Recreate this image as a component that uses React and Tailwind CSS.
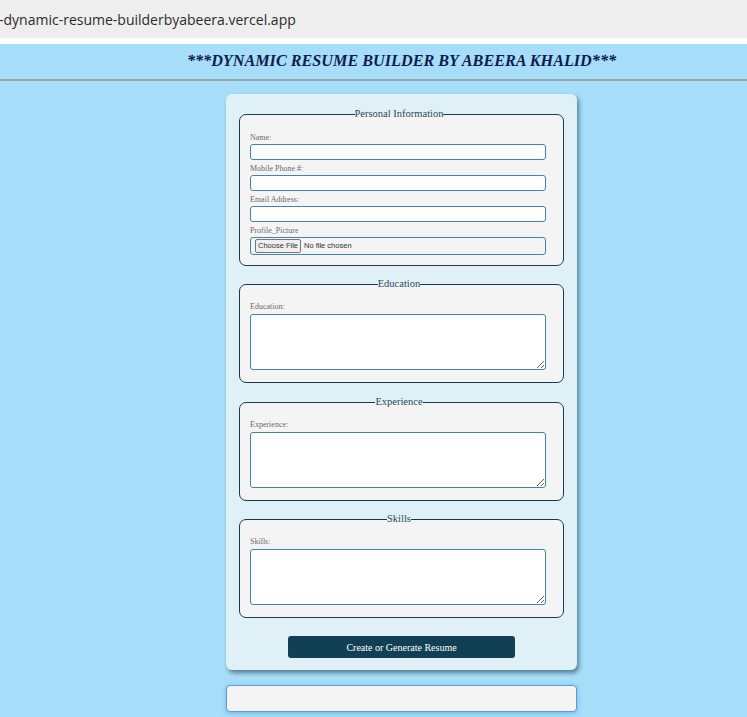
import React from 'react';

const serif = "font-['Liberation_Serif','Times_New_Roman',serif]";

const Field = ({ label, children, first }) => (
  <div className={first ? '' : 'mt-[4px]'}>
    <label className="block text-[8px] leading-[10px] text-[#6b6b6b]">{label}</label>
    <div className="mt-[1px]">{children}</div>
  </div>
);

const TextInput = () => (
  <input type="text" className="block w-[296px] h-[16px] bg-white border border-[#3f86a3] rounded-[3px] outline-none" />
);

const Section = ({ title, children, className = '' }) => (
  <fieldset className={`border border-[#163b4c] rounded-[7px] bg-[#f4f4f4] pl-[10px] pr-[15px] min-w-0 ${className}`}>
    <legend className={`mx-auto px-0 text-[10.5px] leading-[12px] text-[#1f4a5c] ${serif}`}>{title}</legend>
    {children}
  </fieldset>
);

const AreaSection = ({ title, label, className }) => (
  <Section title={title} className={`pt-[12px] pb-[12px] ${className}`}>
    <label className="block text-[8px] leading-[10px] text-[#6b6b6b]">{label}</label>
    <textarea className="block mt-[2px] w-[296px] h-[56px] bg-white border border-[#3f86a3] rounded-[3px] outline-none" />
  </Section>
);

export default function App() {
  return (
    <div className="min-h-[717px] bg-[#a6ddf9] overflow-hidden">
      {/* address bar */}
      <div className="h-[38px] bg-[#efeeee] flex items-center">
        <span className="text-[14px] text-[#2c2c2c] font-['Open_Sans',sans-serif] -ml-[1px]">-dynamic-resume-builderbyabeera.vercel.app</span>
      </div>
      <div className="h-[6px] bg-white" />

      <div className={`w-[803px] ${serif}`}>
        <header className="h-[37px] bg-[#a6ddf9] border-b-2 border-[#9aa3a8] flex items-center justify-center">
          <h1 className="text-[16.2px] font-bold italic text-[#0e1c4c]">***DYNAMIC RESUME BUILDER BY ABEERA KHALID***</h1>
        </header>

        <div className="flex flex-col items-center pt-[13px]">
          <form className="w-[351px] bg-[#dff0f6] rounded-[6px] shadow-[2px_3px_4px_rgba(20,50,60,0.55)] px-[13px] pt-[14px] pb-[12px]">
            <Section title="Personal Information" className="pt-[13px] pb-[10px]">
              <Field label="Name:" first><TextInput /></Field>
              <Field label="Mobile Phone #:"><TextInput /></Field>
              <Field label="Email Address:"><TextInput /></Field>
              <Field label="Profile_Picture">
                <div className="w-[296px] h-[18px] border border-[#3f86a3] rounded-[3px] flex items-center pl-[4px]">
                  <input type="file" className="text-[7.5px] text-[#333] font-['Liberation_Sans',sans-serif] file:text-[7.5px] file:px-[2px] file:py-0 file:mr-[3px] file:border file:border-[#767676] file:rounded-[2px] file:bg-[#efefef]" />
                </div>
              </Field>
            </Section>

            <AreaSection title="Education" label="Education:" className="mt-[12px]" />
            <AreaSection title="Experience" label="Experience:" className="mt-[13px]" />
            <AreaSection title="Skills" label="Skills:" className="mt-[12px]" />

            <div className="flex justify-center mt-[18px]">
              <button type="button" className={`w-[227px] h-[22px] bg-[#113f53] text-white text-[10px] rounded-[3px] ${serif}`}>Create or Generate Resume</button>
            </div>
          </form>

          <div className="mt-[15px] w-[351px] h-[27px] bg-[#f4f4f4] border border-[#5d9bd8] rounded-[4px] shadow-[0_1px_4px_rgba(60,130,220,0.5)]" />
        </div>
      </div>
    </div>
  );
}
